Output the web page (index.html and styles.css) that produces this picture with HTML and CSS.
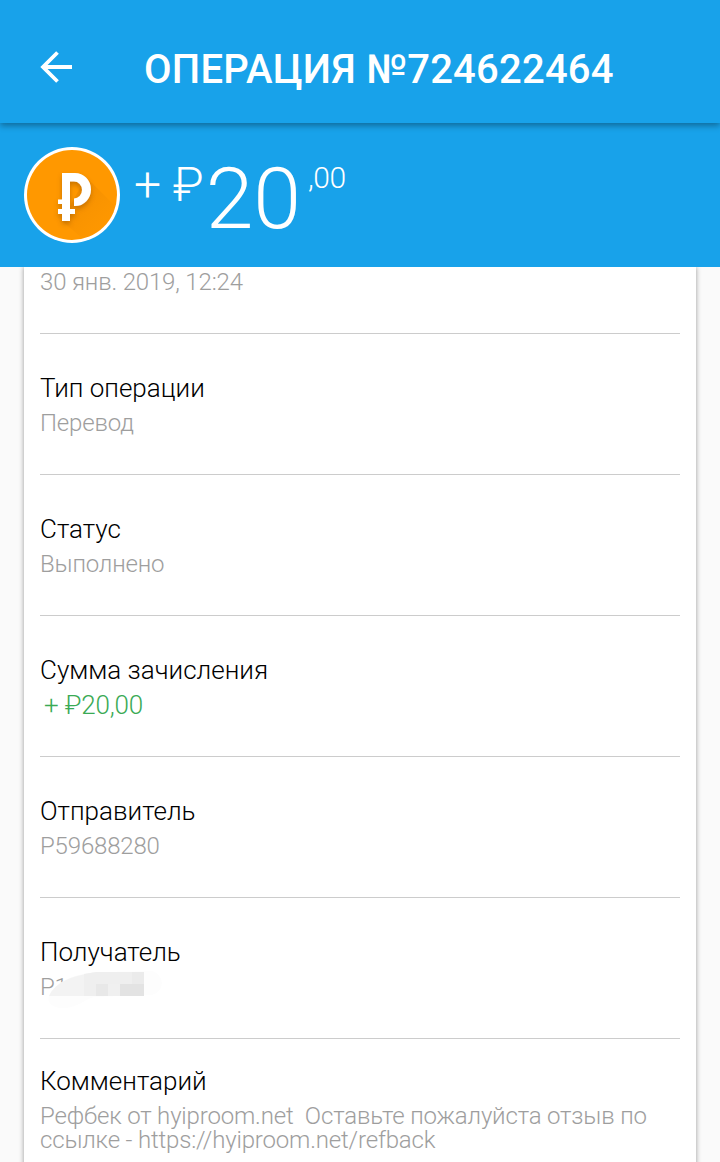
FILE: index.html
```html
<!DOCTYPE html>
<html lang="ru">

<head>
  <meta charset="UTF-8">
  <title>Операция №724622464</title>
  <meta name="viewport" content="width=device-width, initial-scale=1.0">
  <link rel="stylesheet" href="styles.css">
</head>

<body>

  <header class="toolbar">
    <svg class="back-icon" width="34" height="34" viewBox="0 0 34 34">
      <path d="M33 17H4M18.500 2.500L4 17L18.500 31.500" fill="none" stroke="#fff" stroke-width="3.8" />
    </svg>
    <h1>ОПЕРАЦИЯ №724622464</h1>
  </header>

  <section class="summary">
    <svg class="coin" width="96" height="96" viewBox="0 0 96 96">
      <defs>
        <linearGradient id="shade" x1="40" y1="40" x2="82" y2="82" gradientUnits="userSpaceOnUse">
          <stop offset="0" stop-color="#d97800" stop-opacity="0.4" />
          <stop offset="1" stop-color="#f39000" stop-opacity="0.1" />
        </linearGradient>
        <clipPath id="disc"><circle cx="48" cy="48" r="45" /></clipPath>
        <filter id="soft" x="-40%" y="-40%" width="180%" height="180%">
          <feDropShadow dx="0" dy="3" stdDeviation="2.5" flood-color="#8a4b00" flood-opacity="0.45" />
        </filter>
      </defs>
      <circle cx="48" cy="48" r="48" fill="#fff" />
      <circle cx="48" cy="48" r="45" fill="#ff9800" />
      <path d="M62 30L104 72L90 118L38 74Z" fill="url(#shade)" clip-path="url(#disc)" />
      <g filter="url(#soft)" fill="#fff">
        <path d="M38 26H51A16 16.500 0 0 1 51 59H50V51.500A8 8.500 0 0 0 50 34.500H46V62H51V67H46V74H38V67H34V62H38V57H34V52.500H38Z" />
      </g>
    </svg>
    <div class="sum">
      <span class="currency">+ ₽</span>
      <span class="whole">20</span>
      <span class="cents">,00</span>
    </div>
  </section>

  <main class="card">
    <div class="row row-first">
      <div class="value">30 янв. 2019, 12:24</div>
    </div>
    <div class="row">
      <div class="label">Тип операции</div>
      <div class="value">Перевод</div>
    </div>
    <div class="row">
      <div class="label">Статус</div>
      <div class="value">Выполнено</div>
    </div>
    <div class="row">
      <div class="label">Сумма зачисления</div>
      <div class="value income">+ ₽20,00</div>
    </div>
    <div class="row">
      <div class="label">Отправитель</div>
      <div class="value">P59688280</div>
    </div>
    <div class="row">
      <div class="label">Получатель</div>
      <div class="value masked">P1
        <svg class="mask" width="124" height="42" viewBox="0 0 124 42">
          <path d="M9 25C15 12 32 2 60 1L112 0C125 4 125 20 112 24L54 26C44 29 38 36 26 37C14 38 6 32 9 25Z" fill="#fdfdfd" />
          <path d="M9 25C15 12 30 4 60 1H104V25Z" fill="#f3f3f3" />
          <path d="M44 3L56 1H104V25H44Z" fill="#efefef" />
          <path d="M56 13H68V25H56Z" fill="#e8e8e8" />
          <path d="M80 13H104V25H80Z" fill="#e3e3e3" />
          <path d="M68 13H80V25H68Z" fill="#f0f0f0" />
          <path d="M92 1H104V13H92Z" fill="#ebebeb" />
        </svg>
      </div>
    </div>
    <div class="row row-comment">
      <div class="label">Комментарий</div>
      <div class="value">Рефбек от hyiproom.net&nbsp; Оставьте пожалуйста отзыв по ссылке - https://hyiproom.net/refback</div>
    </div>
  </main>

</body>

</html>
```
FILE: styles.css
```css
* {
  box-sizing: border-box;
}

body {
  display: flex;
  flex-direction: column;
  height: 1162px;
  margin: 0;
  overflow: hidden;
  background: #fafafa;
  font-family: Roboto, sans-serif;
  font-weight: 300;
}

.toolbar {
  position: relative;
  z-index: 2;
  display: flex;
  flex: none;
  align-items: center;
  height: 123px;
  padding: 16px 39px 0;
  background: #18a2ea;
  box-shadow: 0 3px 6px rgba(0, 0, 0, 0.32);
}

.back-icon {
  flex: none;
  margin-top: -5px;
}

h1 {
  margin: 0 0 0 71px;
  color: #fff;
  font-size: 40px;
  font-weight: 500;
  line-height: 48px;
  letter-spacing: 0.22px;
  white-space: nowrap;
}

.summary {
  position: relative;
  z-index: 1;
  display: flex;
  flex: none;
  height: 144px;
  padding: 24px 24px 0;
  background: #18a2ea;
}

.sum {
  display: flex;
  align-items: flex-start;
  margin-left: 14px;
  color: #fff;
  white-space: nowrap;
}

.currency {
  margin-top: 14px;
  font-size: 48px;
  line-height: 48px;
}

.whole {
  margin: 2px 0 0 2px;
  font-size: 86px;
  line-height: 100px;
}

.cents {
  margin: 14px 0 0 7px;
  font-size: 30px;
  line-height: 34px;
  letter-spacing: -0.5px;
}

.card {
  flex: 1;
  margin: 0 24px;
  padding: 0 16px;
  background: #fff;
  box-shadow: 0 0 5px rgba(0, 0, 0, 0.4);
}

.row {
  height: 141px;
  padding-top: 37px;
  border-bottom: 1px solid #ccc;
}

.label {
  color: #000;
  font-size: 26px;
  line-height: 34px;
}

.value {
  color: #9e9e9e;
  font-size: 24px;
  line-height: 36px;
  letter-spacing: -0.17px;
}

.income {
  padding-left: 4px;
  color: #3aaa55;
  font-size: 26px;
}

/* the date is partly scrolled under the header */
.row-first {
  height: 70px;
  margin-top: -3px;
  padding-top: 0;
}

.row-comment {
  padding-top: 25px;
  border-bottom: none;
}

.row-comment .value {
  margin-top: 6px;
  line-height: 24px;
}

.masked {
  position: relative;
}

.mask {
  position: absolute;
  top: 2px;
  left: 0;
}
```
